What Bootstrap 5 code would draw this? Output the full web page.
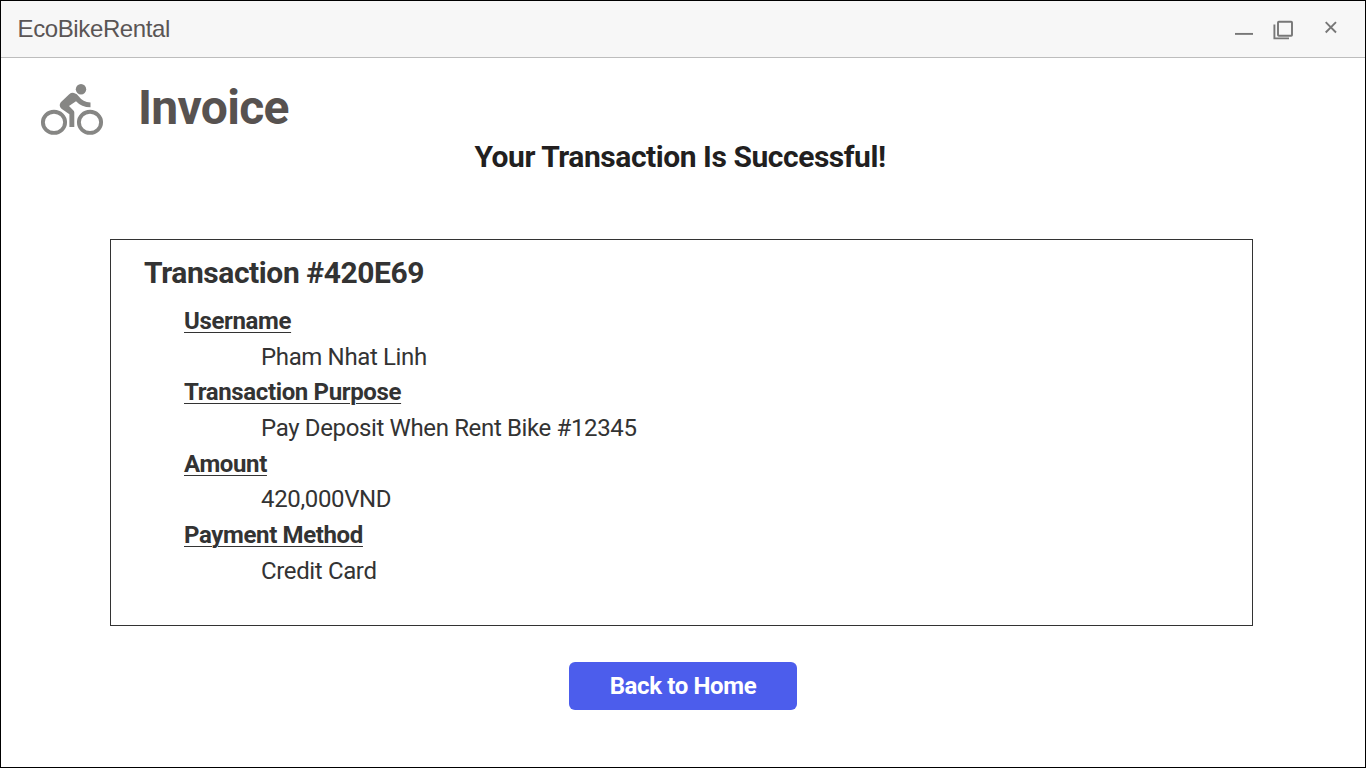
<!DOCTYPE html>
<html lang="en">
<head>
<meta charset="utf-8">
<meta name="viewport" content="width=device-width, initial-scale=1">
<title>EcoBikeRental</title>
<link href="https://cdn.jsdelivr.net/npm/bootstrap@5.3.0/dist/css/bootstrap.min.css" rel="stylesheet">
<style>
body{font-family:Roboto,"Liberation Sans",sans-serif;color:#333}
.app-window{height:768px;border:1px solid #000;background:#fff}
.title-bar{height:57px;background:#f7f7f7;border-bottom:1px solid #bdbdbd;padding-left:16.5px}
.app-name{font:24px/56px "Liberation Sans",sans-serif;color:#5a5555;letter-spacing:-.38px}
.page-head{height:79px;padding:20px 0 0 39px;gap:34px}
.page-title{font-size:48px;line-height:60px;letter-spacing:-.7px;color:#575250}
.result{font-size:30px;line-height:40px;letter-spacing:-.45px;color:#221f1f;padding-right:6px}
.invoice{width:1143px;height:387px;border:1px solid #333;margin:62px 0 0 109px;padding:15px 33px}
.invoice h2{font-size:30px;line-height:36px;letter-spacing:-.42px;margin-bottom:13px}
.invoice dl{font-size:24px;line-height:35.67px;padding-left:40px}
.invoice dt span{text-decoration:underline;text-decoration-thickness:1px;text-underline-offset:3px;letter-spacing:-.36px}
.invoice dd{margin:0 0 0 77px;letter-spacing:-.36px}
.btn-home{--bs-btn-color:#fff;--bs-btn-bg:#4c5dec;--bs-btn-hover-bg:#3f4fd8;--bs-btn-hover-color:#fff;width:228px;height:48px;margin:36px 0 0 568px;font-size:24px;border:0;border-radius:6px;letter-spacing:-.36px;padding:0}
</style>
</head>
<body>
<div class="app-window overflow-hidden">
  <header class="title-bar d-flex justify-content-between">
    <span class="app-name">EcoBikeRental</span>
    <svg width="130" height="56" fill="none" stroke="#777" aria-hidden="true">
      <path d="M0 32.9h18" stroke-width="1.9"/>
      <rect x="43" y="20.8" width="14" height="14" rx=".8" stroke-width="1.9"/>
      <path d="M39.4 23.5V37.4H54" stroke-width="1.9"/>
      <path d="M90.7 21.2l10.3 10.3M101 21.2L90.7 31.5" stroke-width="1.9"/>
    </svg>
  </header>
  <main>
    <div class="page-head d-flex">
      <svg width="64" height="60" viewBox="40 78 64 60" aria-hidden="true">
        <g fill="none" stroke="#868684" stroke-width="3.9"><ellipse cx="54" cy="122.3" rx="11.1" ry="10.6"/><ellipse cx="90" cy="122.3" rx="11.1" ry="10.6"/></g>
        <g fill="#868684"><circle cx="81" cy="89.3" r="5.2"/><path d="M69.2 94.2Q71.5 92.3 74 92.9Q77 93.5 79.3 97Q82.5 101.8 90.5 102.5V107.3Q81.5 107.2 76 101.2L69 106L73.2 110.2Q74.3 111.2 74.3 112.5V127H69.4V114.2L61.5 108.8Q58.3 105.5 60.8 102.2Z"/></g>
      </svg>
      <h1 class="page-title fw-bold mb-0">Invoice</h1>
    </div>
    <p class="result fw-bold text-center mb-0">Your Transaction Is Successful!</p>
    <section class="invoice">
      <h2 class="fw-bold">Transaction #420E69</h2>
      <dl class="mb-0">
        <dt><span>Username</span></dt><dd>Pham Nhat Linh</dd>
        <dt><span>Transaction Purpose</span></dt><dd>Pay Deposit When Rent Bike #12345</dd>
        <dt><span>Amount</span></dt><dd>420,000VND</dd>
        <dt><span>Payment Method</span></dt><dd>Credit Card</dd>
      </dl>
    </section>
    <button type="button" class="btn btn-home d-block fw-bold">Back to Home</button>
  </main>
</div>
<script src="https://cdn.jsdelivr.net/npm/bootstrap@5.3.0/dist/js/bootstrap.bundle.min.js"></script>
</body>
</html>
